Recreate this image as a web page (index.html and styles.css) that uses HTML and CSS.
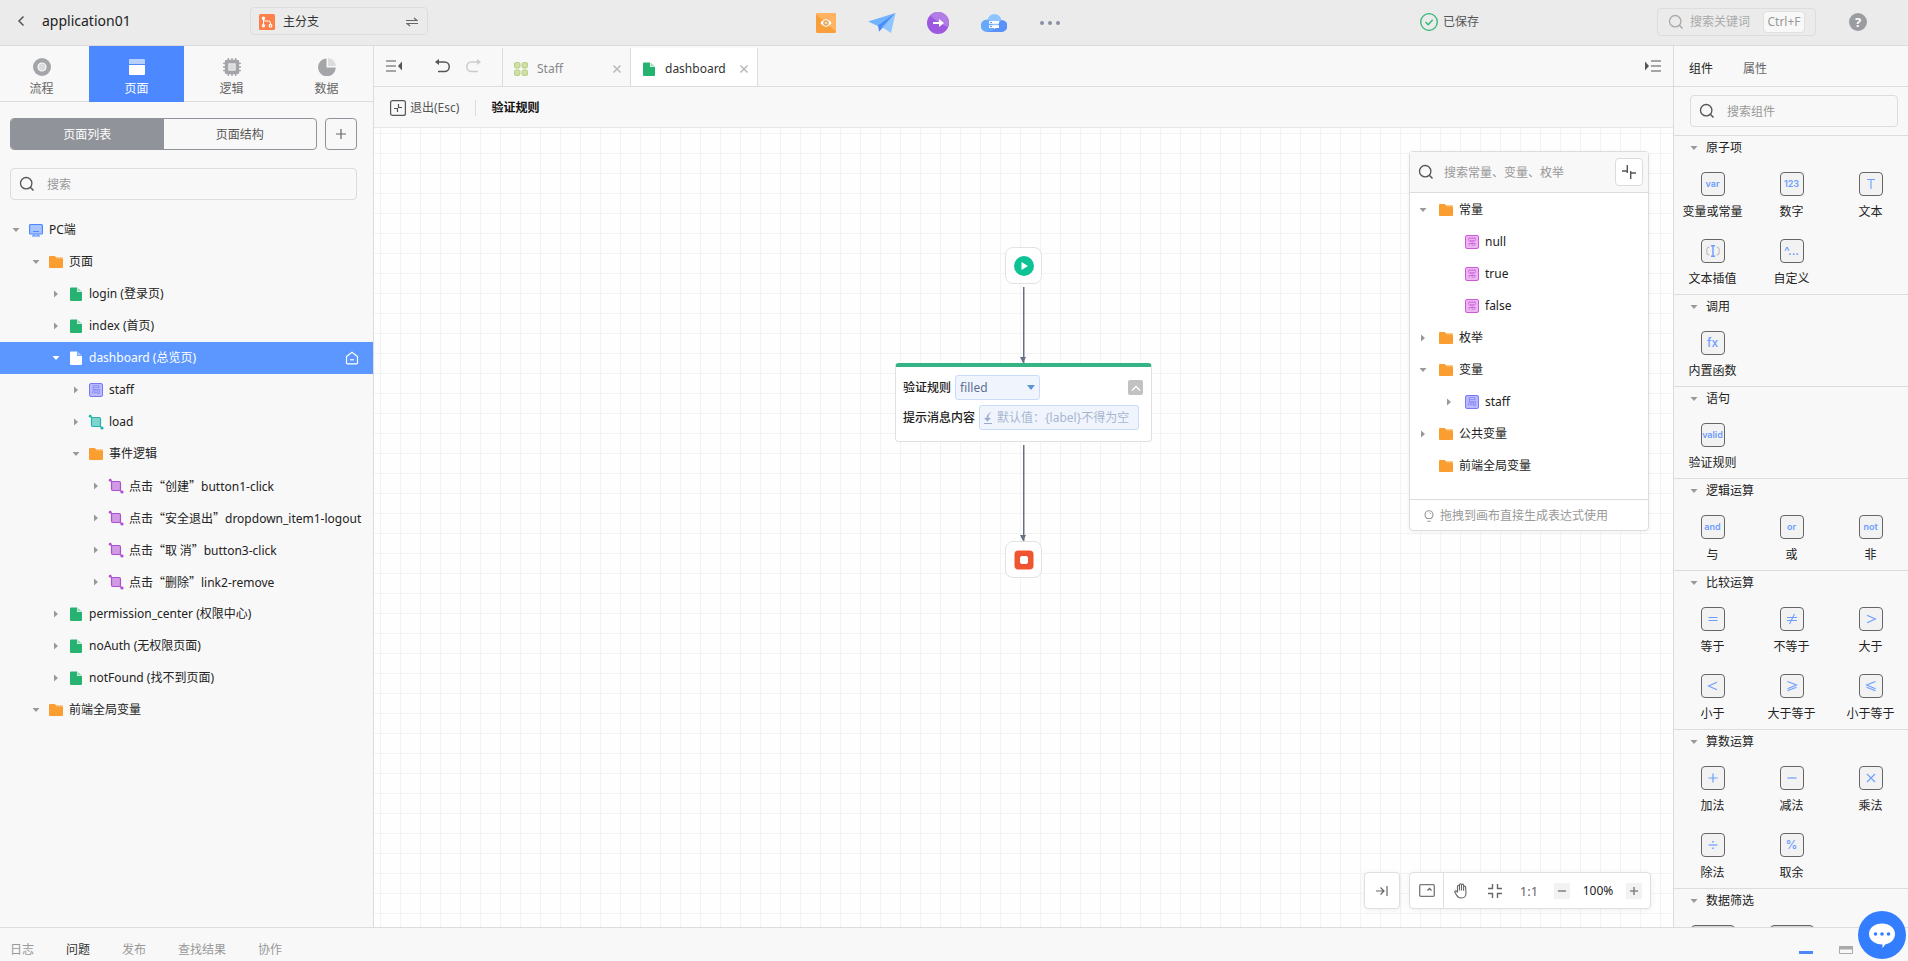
FILE: index.html
```html
<!DOCTYPE html>
<html lang="zh-CN">
<head>
<meta charset="utf-8">
<meta name="viewport" content="width=device-width, initial-scale=1">
<title>application01</title>
<link rel="stylesheet" href="styles.css">
</head>
<body>
<svg class="sprite" aria-hidden="true">
  <symbol id="i-down" viewBox="0 0 16 16"><path d="M4.500 6h7L8 10z" fill="currentColor"/></symbol>
  <symbol id="i-right" viewBox="0 0 16 16"><path d="M6 4.500v7l4-3.500z" fill="currentColor"/></symbol>
  <symbol id="i-search" viewBox="0 0 16 16"><circle cx="7.200" cy="7.200" r="5.700" fill="none" stroke="currentColor" stroke-width="1.300"/><path d="M11.300 11.300l3.200 3.200" stroke="currentColor" stroke-width="1.500"/></symbol>
  <symbol id="i-folder" viewBox="0 0 16 16"><path d="M7 3h7a1 1 0 0 1 1 1v4H7z" fill="#fcc98c"/><path d="M2 2h5l1.500 2.500H14a1 1 0 0 1 1 1V13a1 1 0 0 1-1 1H2a1 1 0 0 1-1-1V3a1 1 0 0 1 1-1z" fill="#fa9e32"/></symbol>
  <symbol id="i-file" viewBox="0 0 16 16"><path d="M9.500 1.500v4h4.500z" fill="currentColor" opacity=".45"/><path d="M3 1.500h6V6h5v8a1 1 0 0 1-1 1H3a1 1 0 0 1-1-1V2.500a1 1 0 0 1 1-1z" fill="currentColor"/></symbol>
  <symbol id="i-event" viewBox="0 0 16 16"><rect x="3.500" y="3.500" width="9" height="9" rx="1.500" fill="currentColor" fill-opacity=".55" stroke="currentColor" stroke-width="1.200"/><path d="M2.500 2.500l1.500 1.500M12 12l2 2" stroke="currentColor" stroke-width="1.200"/><circle cx="2.200" cy="2.200" r="1.400" fill="currentColor"/><circle cx="14" cy="14" r="1.600" fill="currentColor"/></symbol>
  <symbol id="i-pc" viewBox="0 0 16 16"><rect x="1.600" y="2.500" width="12.800" height="9.500" rx="1" fill="#a9c5ff" stroke="#4c88ff" stroke-width="1.200"/><path d="M5 9.500h6M4 14h8" stroke="#4c88ff" stroke-width="1.200"/><path d="M6 12v2M10 12v2" stroke="#4c88ff"/></symbol>
  <symbol id="i-close" viewBox="0 0 10 10"><path d="M1.500 1.500l7 7M8.500 1.500l-7 7" stroke="currentColor" stroke-width="1.600"/></symbol>
</svg>

<div class="app">
  <header class="topbar">
    <div class="topbar-left">
      <button class="icon-btn back" aria-label="返回"><svg width="8" height="12" viewBox="0 0 8 12"><path d="M6.500 1.500L2 6l4.500 4.500" fill="none" stroke="#555" stroke-width="1.500"/></svg></button>
      <h1 class="app-name">application01</h1>
      <button class="branch">
        <svg width="16" height="16" viewBox="0 0 16 16"><rect width="16" height="16" rx="1.500" fill="#ff7f4a"/><path d="M4.500 4v8M4.500 7h5a2 2 0 0 1 2 2v2" fill="none" stroke="#fff"/><circle cx="4.500" cy="4.300" r="1.700" fill="#fff"/><circle cx="4.500" cy="11.700" r="1.700" fill="#fff"/><circle cx="11.500" cy="11.700" r="1.900" fill="#fff"/><circle cx="11.500" cy="11.700" r=".8" fill="#ff7f4a"/></svg>
        <span>主分支</span>
        <svg class="swap" width="12" height="10" viewBox="0 0 12 10"><path d="M0 3.500h11L8 1M12 6.500H1L4 9" fill="none" stroke="#666" stroke-width="1.200"/></svg>
      </button>
    </div>
    <nav class="topbar-tools">
      <button class="icon-btn" aria-label="预览"><svg width="20" height="20" viewBox="0 0 20 20"><rect width="20" height="20" rx="1.500" fill="#f7a03b"/><path d="M0 1.500A1.500 1.500 0 0 1 1.500 0h17A1.500 1.500 0 0 1 20 1.500v17z" fill="#ffb25f"/><path d="M4.500 10q5.500-7.500 11 0q-5.500 7.500-11 0z" fill="#fff"/><rect x="8" y="8" width="4" height="4" rx=".8" fill="#ffdcae" stroke="#d0842d"/></svg></button>
      <button class="icon-btn" aria-label="发布"><svg width="28" height="22" viewBox="0 0 28 22"><path d="M0 9.500L27.500 1 12 15z" fill="#72b3ff"/><path d="M27.500 1L11 14v5.500z" fill="#3f7dfb"/><path d="M11 19.500l-1-6L27.500 1z" fill="#4b8cf8"/><path d="M27.500 1L23 21l-9-6z" fill="#8cc5ff"/><path d="M14 15l-3 4.500L27.500 1z" fill="#5da0fa"/></svg></button>
      <button class="icon-btn" aria-label="导出"><svg width="22" height="22" viewBox="0 0 22 22"><circle cx="11" cy="11" r="11" fill="#9d58e0"/><path d="M3 3.300A11 11 0 0 1 22 11l-1 4q-10-4-18-11.700z" fill="#b27de6"/><path d="M6 10h6V7l5 4-5 4v-3H6z" fill="#fff"/></svg></button>
      <button class="icon-btn" aria-label="云服务"><svg width="26" height="18" viewBox="0 0 26 18"><path d="M6.500 7a7 7 0 0 1 14 0l-2 6H7z" fill="#8fc4ff"/><path d="M6 5.500q5 0 8 12.500H6A6 6 0 0 1 6 5.500z" fill="#68a8fb"/><path d="M5 18q10-1 13-9 1-3 3-3a6 6 0 0 1-1 12z" fill="#5990fb"/><path d="M8 7h10v2.800H8zM8 11.200h10V14H8z" fill="#fff"/><path d="M9 8.400h2M9 12.600h2" stroke="#5990fb"/></svg></button>
      <button class="icon-btn" aria-label="更多"><svg width="20" height="4" viewBox="0 0 20 4"><g fill="#8b90a2"><circle cx="2" cy="2" r="2"/><circle cx="10" cy="2" r="2"/><circle cx="18" cy="2" r="2"/></g></svg></button>
    </nav>
    <div class="topbar-right">
      <div class="saved"><svg width="18" height="18" viewBox="0 0 18 18"><circle cx="9" cy="9" r="8.300" fill="none" stroke="#2fb573" stroke-width="1.300"/><path d="M5.500 9l2.700 2.700 4.500-5" fill="none" stroke="#2fb573" stroke-width="1.300"/></svg><span>已保存</span></div>
      <label class="global-search"><svg width="16" height="16"><use href="#i-search"/></svg><input type="text" placeholder="搜索关键词" aria-label="搜索关键词"><kbd>Ctrl+F</kbd></label>
      <button class="help" aria-label="帮助">?</button>
    </div>
  </header>

  <div class="workspace">
    <aside class="left">
      <nav class="modes">
        <button class="mode"><svg width="18" height="18" viewBox="0 0 18 18"><circle cx="9" cy="9" r="9" fill="#a3a5a8"/><circle cx="9" cy="9" r="4" fill="#d9dadb" stroke="#f8f8f8" stroke-width="1.200"/></svg><span>流程</span></button>
        <button class="mode is-active"><svg width="18" height="18" viewBox="0 0 18 18"><path d="M2 1h14a1 1 0 0 1 1 1v4H1V2a1 1 0 0 1 1-1z" fill="#b7cfff"/><path d="M1 7h16v9a1 1 0 0 1-1 1H2a1 1 0 0 1-1-1z" fill="#fff"/></svg><span>页面</span></button>
        <button class="mode"><svg width="20" height="20" viewBox="0 0 20 20"><path d="M6 0v20M10 0v20M14 0v20M0 6h20M0 10h20M0 14h20" stroke="#a3a5a8" stroke-width="1.500"/><rect x="2" y="2" width="16" height="16" rx="2" fill="#a3a5a8"/><rect x="6.500" y="6.500" width="7" height="7" fill="#d9dadb" stroke="#f4f4f4"/></svg><span>逻辑</span></button>
        <button class="mode"><svg width="18" height="18" viewBox="0 0 18 18"><path d="M8.500 0.500V9.500H17.800A8.900 8.900 0 1 1 8.500 .5z" fill="#a3a5a8"/><path d="M10 0a8.500 8.500 0 0 1 8 8h-8z" fill="#dcdddd"/></svg><span>数据</span></button>
      </nav>
      <div class="page-switch">
        <div class="segmented"><button class="seg is-active">页面列表</button><button class="seg">页面结构</button></div>
        <button class="add" aria-label="新增"><svg width="10" height="10" viewBox="0 0 10 10"><path d="M5 0v10M0 5h10" stroke="#666" stroke-width="1.200"/></svg></button>
      </div>
      <label class="search"><svg width="16" height="16"><use href="#i-search"/></svg><input type="text" placeholder="搜索" aria-label="搜索"></label>
      <ul class="tree">
        <li class="row"><button class="toggle" aria-label="收起"><svg><use href="#i-down"/></svg></button><svg class="ic"><use href="#i-pc"/></svg><span>PC端</span></li>
        <li class="row lv1"><button class="toggle" aria-label="收起"><svg><use href="#i-down"/></svg></button><svg class="ic"><use href="#i-folder"/></svg><span>页面</span></li>
        <li class="row lv2"><button class="toggle" aria-label="展开"><svg><use href="#i-right"/></svg></button><svg class="ic green"><use href="#i-file"/></svg><span>login (登录页)</span></li>
        <li class="row lv2"><button class="toggle" aria-label="展开"><svg><use href="#i-right"/></svg></button><svg class="ic green"><use href="#i-file"/></svg><span>index (首页)</span></li>
        <li class="row lv2 is-active"><button class="toggle" aria-label="收起"><svg><use href="#i-down"/></svg></button><svg class="ic"><use href="#i-file"/></svg><span>dashboard (总览页)</span><svg class="home" width="14" height="14" viewBox="0 0 14 14"><path d="M1.500 5.500L7 1.200l5.500 4.300V12a.8.8 0 0 1-.8.8H2.300a.8.8 0 0 1-.8-.8z" fill="none" stroke="#fff" stroke-width="1.200"/><path d="M5 8.800h4" stroke="#fff" stroke-width="1.200"/></svg></li>
        <li class="row lv3"><button class="toggle" aria-label="展开"><svg><use href="#i-right"/></svg></button><i class="tag local">局</i><span>staff</span></li>
        <li class="row lv3"><button class="toggle" aria-label="展开"><svg><use href="#i-right"/></svg></button><svg class="ic teal"><use href="#i-event"/></svg><span>load</span></li>
        <li class="row lv3"><button class="toggle" aria-label="收起"><svg><use href="#i-down"/></svg></button><svg class="ic"><use href="#i-folder"/></svg><span>事件逻辑</span></li>
        <li class="row lv4"><button class="toggle" aria-label="展开"><svg><use href="#i-right"/></svg></button><svg class="ic purple"><use href="#i-event"/></svg><span><b>点击“创建”</b>button1-click</span></li>
        <li class="row lv4"><button class="toggle" aria-label="展开"><svg><use href="#i-right"/></svg></button><svg class="ic purple"><use href="#i-event"/></svg><span><b>点击“安全退出”</b>dropdown_item1-logout</span></li>
        <li class="row lv4"><button class="toggle" aria-label="展开"><svg><use href="#i-right"/></svg></button><svg class="ic purple"><use href="#i-event"/></svg><span><b>点击“取 消”</b>button3-click</span></li>
        <li class="row lv4"><button class="toggle" aria-label="展开"><svg><use href="#i-right"/></svg></button><svg class="ic purple"><use href="#i-event"/></svg><span><b>点击“删除”</b>link2-remove</span></li>
        <li class="row lv2"><button class="toggle" aria-label="展开"><svg><use href="#i-right"/></svg></button><svg class="ic green"><use href="#i-file"/></svg><span>permission_center (权限中心)</span></li>
        <li class="row lv2"><button class="toggle" aria-label="展开"><svg><use href="#i-right"/></svg></button><svg class="ic green"><use href="#i-file"/></svg><span>noAuth (无权限页面)</span></li>
        <li class="row lv2"><button class="toggle" aria-label="展开"><svg><use href="#i-right"/></svg></button><svg class="ic green"><use href="#i-file"/></svg><span>notFound (找不到页面)</span></li>
        <li class="row lv1"><button class="toggle" aria-label="收起"><svg><use href="#i-down"/></svg></button><svg class="ic"><use href="#i-folder"/></svg><span>前端全局变量</span></li>
      </ul>
    </aside>

    <main class="editor">
      <div class="tabbar">
        <div class="history">
          <button class="icon-btn fold" aria-label="收起左栏"><svg width="16" height="12" viewBox="0 0 16 12"><path d="M0 1h10M0 6h10M0 11h10" stroke="#a5a5a5" stroke-width="2"/><path d="M16 1.500v9L12 6z" fill="#555"/></svg></button>
          <button class="icon-btn" aria-label="撤销"><svg width="16" height="14" viewBox="0 0 16 14"><path d="M2 3h8.500a4.700 4.700 0 0 1 0 9.500H4" fill="none" stroke="#555" stroke-width="1.500"/><path d="M5 0v6L1 3z" fill="#555"/></svg></button>
          <button class="icon-btn redo" aria-label="重做"><svg width="16" height="14" viewBox="0 0 16 14"><path d="M14 3H5.500a4.700 4.700 0 0 0 0 9.500H12" fill="none" stroke="#ccc" stroke-width="1.500"/><path d="M11 0v6l4-3z" fill="#ccc"/></svg></button>
        </div>
        <div class="tab"><svg width="16" height="16" viewBox="0 0 16 16"><g fill="#cfe0a6" stroke="#b7cf80"><rect x="1.500" y="1.500" width="5.500" height="5.500" rx="1.500"/><rect x="9" y="1.500" width="5.500" height="5.500" rx="1.500"/><rect x="1.500" y="9" width="5.500" height="5.500" rx="1.500"/><rect x="9" y="9" width="5.500" height="5.500" rx="1.500"/></g></svg><span>Staff</span><button class="close" aria-label="关闭"><svg width="10" height="10"><use href="#i-close"/></svg></button></div>
        <div class="tab is-active"><svg class="green" width="16" height="16"><use href="#i-file"/></svg><span>dashboard</span><button class="close" aria-label="关闭"><svg width="10" height="10"><use href="#i-close"/></svg></button></div>
        <button class="icon-btn unfold" aria-label="收起右栏"><svg width="16" height="12" viewBox="0 0 16 12"><path d="M6 1h10M6 6h10M6 11h10" stroke="#a5a5a5" stroke-width="2"/><path d="M0 1.500v9L4 6z" fill="#555"/></svg></button>
      </div>
      <div class="crumbs">
        <button class="exit"><svg width="16" height="16" viewBox="0 0 16 16"><rect x=".6" y=".6" width="14.800" height="14.800" rx="2" fill="none" stroke="#555" stroke-width="1.200"/><path d="M4 8.500h3.500V12M8.500 4v3.500H12" fill="none" stroke="#555" stroke-width="1.200"/></svg><span>退出(Esc)</span></button>
        <span class="sep"></span>
        <strong>验证规则</strong>
      </div>
      <div class="canvas">
        <div class="flow">
          <div class="terminal"><svg width="20" height="20" viewBox="0 0 20 20"><circle cx="10" cy="10" r="10" fill="#0dc295"/><path d="M7.500 6v8l6.500-4z" fill="#fff"/></svg></div>
          <div class="edge"></div>
          <section class="rule">
            <div class="field"><label for="rule">验证规则</label><span class="pick"><select id="rule"><option>filled</option></select><svg width="8" height="5" viewBox="0 0 8 5"><path d="M0 0h8L4 5z" fill="#5b95d6"/></svg></span><button class="collapse" aria-label="收起"><svg width="10" height="6" viewBox="0 0 10 6"><path d="M1 5.500l4-4 4 4" fill="none" stroke="#fff" stroke-width="1.300"/></svg></button></div>
            <div class="field"><label for="msg">提示消息内容</label><span class="slot"><svg width="9" height="12" viewBox="0 0 9 12"><path d="M8 0Q4 2 4.500 6H7L3.500 9.500 0 6h2.500Q3 1 8 0z" fill="#9aaccd"/><path d="M0 11.500h8" stroke="#9aaccd"/></svg><input id="msg" type="text" placeholder="默认值：{label}不得为空"></span></div>
          </section>
          <div class="edge long"></div>
          <div class="terminal"><svg width="20" height="20" viewBox="0 0 20 20"><rect x=".5" y=".5" width="19" height="19" rx="4" fill="#f0552f"/><rect x="6" y="6" width="8" height="8" rx="2" fill="#fff"/></svg></div>
        </div>

        <section class="vars">
          <div class="vars-head"><svg width="16" height="16"><use href="#i-search"/></svg><input type="text" placeholder="搜索常量、变量、枚举" aria-label="搜索常量、变量、枚举"><button class="shrink" aria-label="收起"><svg width="14" height="14" viewBox="0 0 14 14"><path d="M0 6h5.300V0M14 8H8.700v6" fill="none" stroke="#555" stroke-width="1.400"/><path d="M5.300 6v2M8.700 8V6" stroke="#555" stroke-width="1.400"/></svg></button></div>
          <ul class="vars-tree">
            <li class="row"><button class="toggle" aria-label="收起"><svg><use href="#i-down"/></svg></button><svg class="ic"><use href="#i-folder"/></svg><span>常量</span></li>
            <li class="row sub"><span class="toggle"></span><i class="tag const">常</i><span>null</span></li>
            <li class="row sub"><span class="toggle"></span><i class="tag const">常</i><span>true</span></li>
            <li class="row sub"><span class="toggle"></span><i class="tag const">常</i><span>false</span></li>
            <li class="row"><button class="toggle" aria-label="展开"><svg><use href="#i-right"/></svg></button><svg class="ic"><use href="#i-folder"/></svg><span>枚举</span></li>
            <li class="row"><button class="toggle" aria-label="收起"><svg><use href="#i-down"/></svg></button><svg class="ic"><use href="#i-folder"/></svg><span>变量</span></li>
            <li class="row sub"><button class="toggle" aria-label="展开"><svg><use href="#i-right"/></svg></button><i class="tag local">局</i><span>staff</span></li>
            <li class="row"><button class="toggle" aria-label="展开"><svg><use href="#i-right"/></svg></button><svg class="ic"><use href="#i-folder"/></svg><span>公共变量</span></li>
            <li class="row"><span class="toggle"></span><svg class="ic"><use href="#i-folder"/></svg><span>前端全局变量</span></li>
          </ul>
          <p class="vars-tip"><svg width="10" height="12" viewBox="0 0 10 12"><path d="M3 8.500Q1 7 1 4.700a4 4 0 0 1 8 0Q9 7 7 8.500zM3.300 11.300h3.400" fill="none" stroke="#999" stroke-width="1.100"/><path d="M5.500 2.500q1.300.3 1.500 1.700" fill="none" stroke="#999" stroke-width=".8"/></svg><span>拖拽到画布直接生成表达式使用</span></p>
        </section>

        <div class="view-tools">
          <div class="tool-box"><button class="vt" aria-label="贴边"><svg width="12" height="12" viewBox="0 0 12 12"><path d="M0 6h8M4.500 2.500L8 6 4.500 9.500M11 1v10" fill="none" stroke="#666" stroke-width="1.200"/></svg></button></div>
          <div class="tool-box">
            <button class="vt map" aria-label="小地图"><svg width="16" height="13" viewBox="0 0 16 13"><rect x=".7" y=".7" width="14.600" height="11.600" rx="1" fill="none" stroke="#777" stroke-width="1.300"/><path d="M8.500 6.500L10.500 4.500l2 2" fill="none" stroke="#666" stroke-width="1.300"/></svg></button>
            <button class="vt" aria-label="拖动"><svg width="14" height="16" viewBox="0 0 14 16"><path d="M3.500 9.500V3.200a1 1 0 0 1 2 0V7.500 1.700a1 1 0 0 1 2 0V7.500 2.200a1 1 0 0 1 2.100 0V7.800 4a1 1 0 0 1 2 0l.4 6q0 5-4.500 5Q4 15 2.500 12L.8 9q0-1.500 1.500-1l1.200 1.500" fill="none" stroke="#666" stroke-width="1.100"/></svg></button>
            <button class="vt" aria-label="适应画布"><svg width="14" height="14" viewBox="0 0 14 14"><path d="M0 4.500h4.500V0M9.500 0v4.500H14M0 9.500h4.500V14M14 9.500H9.500V14" fill="none" stroke="#666" stroke-width="1.400"/></svg></button>
            <button class="vt ratio">1:1</button>
            <button class="step" aria-label="缩小"><svg width="8" height="8" viewBox="0 0 8 8"><path d="M0 4h8" stroke="#888" stroke-width="1.600"/></svg></button>
            <output>100%</output>
            <button class="step" aria-label="放大"><svg width="8" height="8" viewBox="0 0 8 8"><path d="M0 4h8M4 0v8" stroke="#888" stroke-width="1.600"/></svg></button>
          </div>
        </div>
      </div>
    </main>

    <aside class="right">
      <nav class="right-tabs"><button class="is-active">组件</button><button>属性</button></nav>
      <div class="right-search"><label class="search"><svg width="16" height="16"><use href="#i-search"/></svg><input type="text" placeholder="搜索组件" aria-label="搜索组件"></label></div>
      <div class="palette">
        <section class="group"><h2><svg width="16" height="16"><use href="#i-down"/></svg>原子项</h2><div class="items">
          <button class="item"><i class="box">var</i><span>变量或常量</span></button>
          <button class="item"><i class="box">123</i><span>数字</span></button>
          <button class="item"><i class="box"><svg viewBox="0 0 12 12"><path d="M2 1.500h8M6 1.500V11" stroke="currentColor" stroke-width="1.100"/></svg></i><span>文本</span></button>
          <button class="item"><i class="box"><svg class="wide" viewBox="0 0 14 12"><path d="M3.500 2Q.7 2 .7 6t2.800 4M10.500 2q2.800 0 2.800 4t-2.800 4" fill="none" stroke="#bbb" stroke-width="1.100"/><path d="M7 .8v10.400M5 .7h4M5 11.300h4" stroke="currentColor" stroke-width="1.400"/></svg></i><span>文本插值</span></button>
          <button class="item"><i class="box big">^...</i><span>自定义</span></button>
        </div></section>
        <section class="group"><h2><svg width="16" height="16"><use href="#i-down"/></svg>调用</h2><div class="items">
          <button class="item"><i class="box big">fx</i><span>内置函数</span></button>
        </div></section>
        <section class="group"><h2><svg width="16" height="16"><use href="#i-down"/></svg>语句</h2><div class="items">
          <button class="item"><i class="box">valid</i><span>验证规则</span></button>
        </div></section>
        <section class="group"><h2><svg width="16" height="16"><use href="#i-down"/></svg>逻辑运算</h2><div class="items">
          <button class="item"><i class="box">and</i><span>与</span></button>
          <button class="item"><i class="box">or</i><span>或</span></button>
          <button class="item"><i class="box">not</i><span>非</span></button>
        </div></section>
        <section class="group"><h2><svg width="16" height="16"><use href="#i-down"/></svg>比较运算</h2><div class="items">
          <button class="item"><i class="box"><svg viewBox="0 0 12 12"><path d="M1.500 4.500h9M1.500 7.500h9" stroke="currentColor" stroke-width="1.100"/></svg></i><span>等于</span></button>
          <button class="item"><i class="box"><svg viewBox="0 0 12 12"><path d="M1 4.500h10M1 7.500h10M8.500 1l-5 10" stroke="currentColor" stroke-width="1.100"/></svg></i><span>不等于</span></button>
          <button class="item"><i class="box"><svg viewBox="0 0 12 12"><path d="M2 2.200L10.500 6 2 9.800" fill="none" stroke="currentColor" stroke-width="1.100"/></svg></i><span>大于</span></button>
          <button class="item"><i class="box"><svg viewBox="0 0 12 12"><path d="M10 2.200L1.500 6 10 9.800" fill="none" stroke="currentColor" stroke-width="1.100"/></svg></i><span>小于</span></button>
          <button class="item"><i class="box"><svg viewBox="0 0 12 12"><path d="M1.500 1.500L10.500 5l-9 3.700M10.500 7.300l-9 3.500" fill="none" stroke="currentColor" stroke-width="1.100"/></svg></i><span>大于等于</span></button>
          <button class="item"><i class="box"><svg viewBox="0 0 12 12"><path d="M10.500 1.500L1.500 5l9 3.700M1.500 7.300l9 3.500" fill="none" stroke="currentColor" stroke-width="1.100"/></svg></i><span>小于等于</span></button>
        </div></section>
        <section class="group"><h2><svg width="16" height="16"><use href="#i-down"/></svg>算数运算</h2><div class="items">
          <button class="item"><i class="box"><svg viewBox="0 0 12 12"><path d="M1.500 6h9M6 1.500v9" stroke="currentColor" stroke-width="1.200"/></svg></i><span>加法</span></button>
          <button class="item"><i class="box"><svg viewBox="0 0 12 12"><path d="M1.500 6h9" stroke="currentColor" stroke-width="1.200"/></svg></i><span>减法</span></button>
          <button class="item"><i class="box"><svg viewBox="0 0 12 12"><path d="M2 2l8 8M10 2l-8 8" stroke="currentColor" stroke-width="1.100"/></svg></i><span>乘法</span></button>
          <button class="item"><i class="box"><svg viewBox="0 0 12 12"><path d="M1.500 6h9" stroke="currentColor" stroke-width="1.200"/><path d="M5.200 2h1.600v1.600H5.200zM5.200 8.500h1.600v1.600H5.200z" fill="currentColor"/></svg></i><span>除法</span></button>
          <button class="item"><i class="box big">%</i><span>取余</span></button>
        </div></section>
        <section class="group"><h2><svg width="16" height="16"><use href="#i-down"/></svg>数据筛选</h2><div class="items">
          <button class="item" aria-label="筛选"><i class="box broad"></i></button>
          <button class="item" aria-label="排序"><i class="box broad"></i></button>
        </div></section>
      </div>
    </aside>
  </div>

  <footer class="bottombar">
    <button>日志</button><button class="is-active">问题</button><button>发布</button><button>查找结果</button><button>协作</button>
    <div class="dock">
      <button class="icon-btn" aria-label="最小化"><svg width="14" height="8" viewBox="0 0 14 8"><path d="M0 6.500h14" stroke="#4c88ff" stroke-width="3"/></svg></button>
      <button class="icon-btn" aria-label="还原"><svg width="14" height="8" viewBox="0 0 14 8"><path d="M.5 .5h13v7H.5z" fill="none" stroke="#aaa"/><path d="M0 2h14" stroke="#aaa" stroke-width="3"/></svg></button>
    </div>
  </footer>
</div>
<button class="chat" aria-label="在线客服"><svg width="26" height="26" viewBox="0 0 26 26"><path d="M13 1.500c7.500 0 13 4.500 13 10.500 0 5-4 9.300-9.500 10.300L13.500 26v-3.500C6 22.500 0 18 0 12S5.500 1.500 13 1.500z" fill="#fff"/><g fill="#337eff"><circle cx="6.500" cy="12" r="1.800"/><circle cx="13" cy="12" r="1.800"/><circle cx="19.500" cy="12" r="1.800"/></g></svg></button>
</body>
</html>
```
FILE: styles.css
```css
* { box-sizing: border-box; }
body {
  margin: 0;
  font-family: "Noto Sans", "Noto Sans CJK SC", sans-serif;
  font-size: 12px;
  line-height: 18px;
  color: #333;
  background: #f8f8f8;
}
button, input, select, output {
  font: inherit;
  color: inherit;
  margin: 0;
  padding: 0;
  border: 0;
  background: none;
}
button { cursor: pointer; }
input { min-width: 0; outline: none; }
input::placeholder { color: #999; opacity: 1; }
ul, p, h1, h2 { margin: 0; padding: 0; list-style: none; font-weight: 400; }
i { font-style: normal; }
svg { display: block; flex: none; }
.sprite { position: absolute; width: 0; height: 0; }
.icon-btn { display: grid; place-items: center; flex: none; }
.green { color: #26b271; }
.teal { color: #1fb5ac; }
.purple { color: #b04ed2; }

.app { display: flex; flex-direction: column; height: 100vh; overflow: hidden; }

/* top bar */
.topbar {
  flex: none;
  display: grid;
  grid-template-columns: 49fr 280px 51fr;
  align-items: stretch;
  height: 46px;
  background: #ebebeb;
  border-bottom: 1px solid #dcdcdc;
}
.topbar-left { display: flex; align-items: center; padding: 0 0 4px 17px; }
.back { width: 8px; margin-right: 17px; }
.app-name { width: 208px; font-size: 14px; line-height: 20px; color: #222; }
.branch {
  display: flex;
  align-items: center;
  gap: 8px;
  width: 178px;
  height: 28px;
  padding: 2px 9px 0 8px;
  border: 1px solid #ddd;
  border-radius: 4px;
  color: #333;
}
.swap { margin-left: auto; }
.topbar-tools { display: grid; grid-template-columns: repeat(5, 1fr); }
.topbar-right { display: flex; align-items: center; justify-content: flex-end; padding: 0 41px 2px 0; }
.saved { display: flex; align-items: center; gap: 5px; margin-right: 178px; color: #555; }
.global-search {
  display: flex;
  align-items: center;
  width: 159px;
  height: 28px;
  margin-right: 33px;
  padding: 0 10px;
  border: 1px solid #ddd;
  border-radius: 4px;
  color: #aaa;
}
.global-search input { flex: 1; margin-left: 6px; }
.global-search input::placeholder { color: #aaa; }
.global-search kbd {
  flex: none;
  width: 42px;
  border: 1px solid #e0e0e0;
  border-radius: 4px;
  background: #f8f8f8;
  font-family: inherit;
  line-height: 20px;
  text-align: center;
  color: #999;
}
.help {
  width: 18px;
  height: 18px;
  border-radius: 50%;
  background: #9b9c9f;
  color: #fff;
  font-size: 13px;
  font-weight: 700;
  line-height: 18px;
}

.workspace { flex: 1; display: flex; min-height: 0; }

/* left panel */
.left { flex: none; width: 374px; border-right: 1px solid #dcdcdc; overflow: hidden; }
.modes {
  display: flex;
  justify-content: flex-end;
  height: 56px;
  margin-right: -1px;
  border-bottom: 1px solid #dcdcdc;
}
.mode {
  flex: none;
  display: flex;
  flex-direction: column;
  align-items: center;
  justify-content: flex-end;
  gap: 4px;
  width: 95px;
  height: 56px;
  padding-bottom: 4px;
  color: #666;
}
.mode svg { height: 18px; }
.mode.is-active { background: #4c88ff; color: #fff; }
.page-switch { display: flex; gap: 8px; padding: 16px 16px 0 10px; }
.segmented {
  flex: 1;
  display: flex;
  height: 32px;
  border: 1px solid #909399;
  border-radius: 4px;
  overflow: hidden;
}
.seg { flex: 1; padding-top: 1px; color: #555; }
.seg.is-active { background: #909399; color: #fff; }
.add { display: grid; place-items: center; width: 32px; height: 32px; border: 1px solid #909399; border-radius: 4px; }
.search {
  display: flex;
  align-items: center;
  gap: 12px;
  height: 32px;
  padding: 0 8px;
  border: 1px solid #dcdcdc;
  border-radius: 4px;
  color: #555;
}
.search input { flex: 1; padding-top: 1px; }
.left > .search { margin: 18px 16px 14px 10px; }

.row { display: flex; align-items: center; height: 32px; white-space: nowrap; color: #222; }
.row > svg.ic, .tag { width: 16px; height: 16px; margin: 0 5px 0 4px; }
.row b { font-family: "Noto Sans CJK SC", sans-serif; font-weight: 400; }
.toggle { flex: none; width: 16px; height: 16px; color: #999; }
.toggle svg { width: 16px; height: 16px; }
.tree .row { padding-left: 8px; }
.tree .lv1 { padding-left: 28px; }
.tree .lv2 { padding-left: 48px; }
.tree .lv3 { padding-left: 68px; }
.tree .lv4 { padding-left: 88px; }
.tree .is-active, .tree .is-active .toggle { color: #fff; }
.tree .is-active { background: #5c97ff; }
.home { margin: 0 14px 0 auto; }
.tag {
  flex: none;
  width: 14px;
  height: 14px;
  border: 1px solid;
  border-radius: 2px;
  font-family: "Noto Sans CJK SC", sans-serif;
  font-size: 9px;
  line-height: 12px;
  text-align: center;
}
.row > .tag { width: 14px; height: 14px; margin: 0 6px 0 5px; }
.local { color: #7a79f5; background-color: #b9b9fd; }
.const { color: #cb5cd8; background-color: #ecb5f2; }

/* editor */
.editor { flex: 1; display: flex; flex-direction: column; min-width: 0; }
.tabbar { flex: none; display: flex; align-items: flex-end; height: 41px; border-bottom: 1px solid #dcdcdc; }
.history { display: flex; align-items: center; width: 128px; height: 40px; padding-left: 12px; }
.fold { margin-right: 32px; }
.redo { margin-left: 16px; }
.tab {
  display: flex;
  align-items: center;
  width: 128px;
  height: 38px;
  padding: 3px 8px 0 10px;
  border-left: 1px solid #dcdcdc;
  color: #888;
}
.tab span { margin-left: 8px; }
.tab.is-active { background: #fff; border-right: 1px solid #dcdcdc; color: #333; }
.close { margin-left: auto; color: #bbb; }
.unfold { align-self: center; margin: 0 12px 0 auto; }
.crumbs { flex: none; display: flex; align-items: center; height: 41px; padding: 1px 0 0 16px; border-bottom: 1px solid #e6e6e6; }
.exit { display: flex; align-items: center; gap: 4px; color: #555; }
.sep { width: 1px; height: 16px; margin: 0 15px 0 16px; background: #dcdcdc; }
.crumbs strong { color: #111; }
.canvas {
  flex: 1;
  position: relative;
  min-height: 0;
  background-color: #fefefe;
  background-image: linear-gradient(#f3f3f3 1px, transparent 1px), linear-gradient(90deg, #f3f3f3 1px, transparent 1px);
  background-size: 20px 20px;
  background-position: 6px 5px;
}
.flow { display: flex; flex-direction: column; align-items: center; padding-top: 119px; }
.terminal {
  display: grid;
  place-items: center;
  width: 37px;
  height: 37px;
  border: 1px solid #e2e2e2;
  border-radius: 8px;
  background: #fff;
}
.edge { position: relative; width: 1px; height: 76px; margin-top: 3px; background: #667082; box-shadow: 1px 0 #b4bac4; }
.edge.long { height: 96px; }
.edge::after {
  content: "";
  position: absolute;
  left: -3px;
  bottom: 0;
  border: 3px solid transparent;
  border-top: 6px solid #667082;
  border-bottom: 0;
}
.rule {
  width: 257px;
  padding: 8px 7px 6px;
  border: 1px solid #e0e0e0;
  border-top: 4px solid #34b485;
  border-radius: 4px;
  background: #fff;
}
.field { display: flex; align-items: center; gap: 4px; height: 25px; margin-bottom: 5px; }
.field label { font-weight: 500; color: #222; }
.pick, .slot {
  display: flex;
  align-items: center;
  height: 25px;
  padding: 0 4px;
  border: 1px solid #c8dcfa;
  border-radius: 3px;
  background: #f0f5fd;
}
.pick { width: 85px; color: #5d6f96; }
.pick select { flex: 1; appearance: none; outline: none; }
.slot { width: 160px; }
.slot input { flex: 1; margin-left: 4px; }
.slot input::placeholder { color: #a9b5d0; }
.collapse { display: grid; place-items: center; width: 15px; height: 15px; margin: 0 1px 0 auto; border-radius: 2px; background: #c2c2c2; }

/* variable picker floating over the canvas */
.vars {
  position: absolute;
  top: 23px;
  right: 24px;
  width: 240px;
  border: 1px solid #dcdcdc;
  border-radius: 4px;
  background: #fff;
  box-shadow: 0 1px 4px #0000000d;
}
.vars-head { display: flex; align-items: center; gap: 10px; height: 41px; padding: 0 5px 0 8px; border-bottom: 1px solid #dcdcdc; background: #f8f8f8; color: #555; }
.vars-head input { flex: 1; padding-top: 1px; }
.shrink { display: grid; place-items: center; width: 28px; height: 28px; border: 1px solid #dcdcdc; border-radius: 4px; background: #fff; }
.vars-tree { padding: 1px 0 17px; }
.vars-tree .row { padding-left: 5px; }
.vars-tree .sub { padding-left: 31px; }
.vars-tree .row > svg.ic { margin-left: 7px; }
.vars-tree .row > .tag { margin-left: 8px; }
.vars-tip { display: flex; align-items: center; gap: 6px; height: 31px; padding: 1px 0 0 14px; border-top: 1px solid #dcdcdc; color: #999; }

/* zoom controls floating over the canvas */
.view-tools { position: absolute; right: 22px; bottom: 18px; display: flex; gap: 9px; }
.tool-box { display: flex; align-items: center; height: 37px; border: 1px solid #dfdfdf; border-radius: 4px; background: #fff; box-shadow: 0 1px 6px #0000000f; }
.vt { display: grid; place-items: center; width: 34px; height: 35px; color: #666; }
.map { border-right: 1px solid #dfdfdf; }
.ratio { font-size: 13px; }
.step { display: grid; place-items: center; width: 16px; height: 16px; margin: 0 8px; background: #f2f2f2; }
.tool-box output { width: 40px; text-align: center; color: #222; }

/* component panel */
.right { flex: none; display: flex; flex-direction: column; width: 235px; border-left: 1px solid #dcdcdc; }
.right-tabs { flex: none; display: flex; gap: 30px; height: 41px; padding: 5px 0 0 15px; border-bottom: 1px solid #dcdcdc; color: #666; }
.right-tabs .is-active { color: #222; }
.right-search { flex: none; padding: 8px 10px 8px 16px; }
.palette { flex: 1; min-height: 0; overflow: hidden; }
.group { border-top: 1px solid #dcdcdc; }
.group h2 { display: flex; align-items: center; gap: 4px; height: 24px; padding-left: 12px; font-size: 12px; line-height: 18px; color: #222; }
.group h2 svg { color: #999; }
.items { display: grid; grid-template-columns: repeat(3, 79px); margin-left: -1px; }
.item { display: flex; flex-direction: column; align-items: center; gap: 7px; height: 67px; padding-top: 12px; color: #222; white-space: nowrap; }
.box {
  flex: none;
  display: grid;
  place-items: center;
  width: 24px;
  height: 24px;
  border: 1px solid #666;
  border-radius: 4px;
  background: #f2f2f2;
  color: #6b9dff;
  font-family: Inter, sans-serif;
  font-size: 9px;
  font-weight: 600;
  line-height: 12px;
}
.box svg { width: 12px; height: 12px; }
.box svg.wide { width: 14px; }
.big { font-size: 12px; font-weight: 500; }
.broad { width: 44px; background: #d5d5d5; }

/* bottom bar */
.bottombar { flex: none; display: flex; align-items: center; gap: 32px; height: 34px; padding: 10px 55px 0 10px; border-top: 1px solid #dcdcdc; color: #999; }
.bottombar .is-active { color: #333; }
.dock { display: flex; gap: 26px; margin-left: auto; }
.chat {
  position: fixed;
  right: 2px;
  bottom: 2px;
  display: grid;
  place-items: center;
  width: 48px;
  height: 48px;
  border-radius: 50%;
  background: #337eff;
}
```
